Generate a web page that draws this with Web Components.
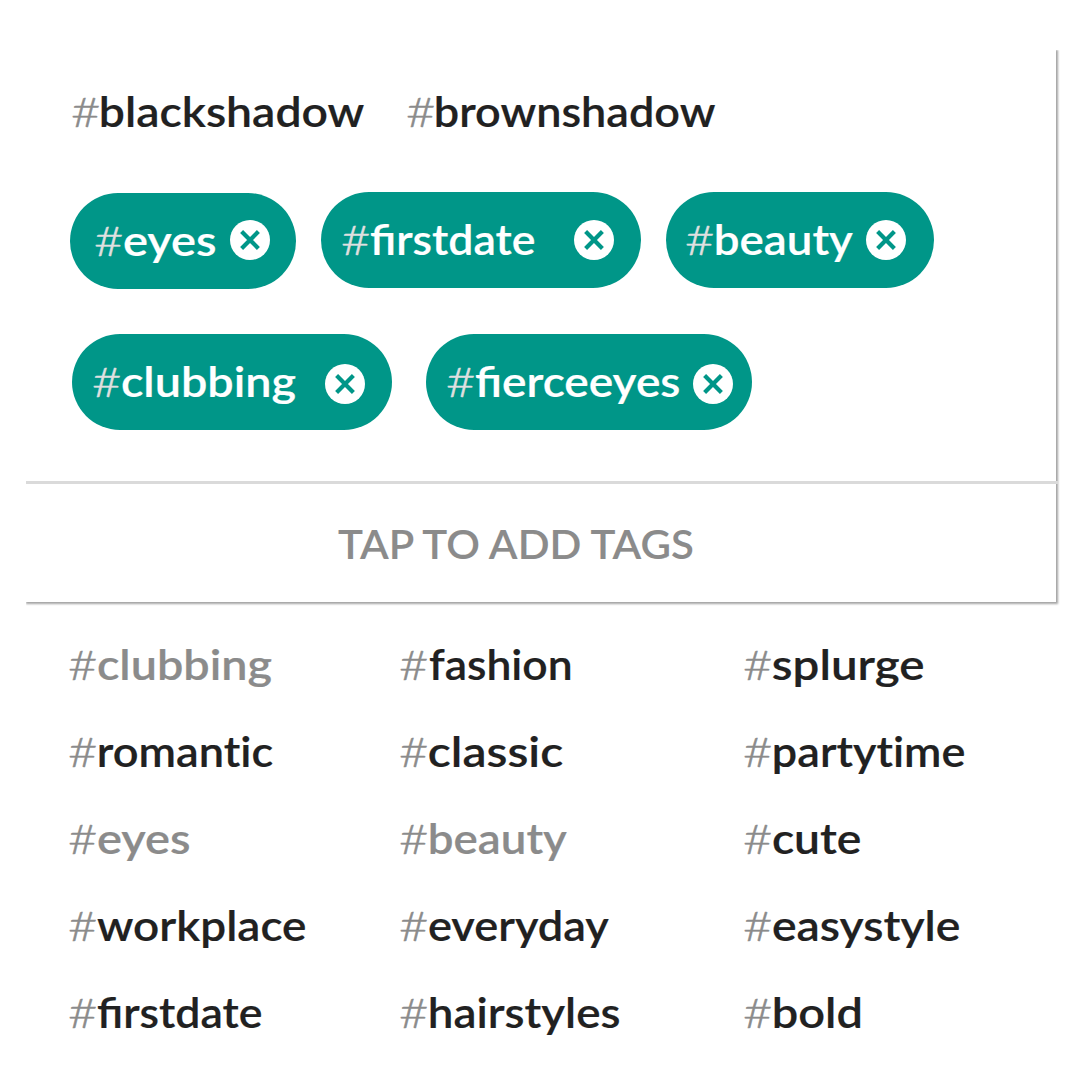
<!DOCTYPE html>
<html lang="en">
<head>
<meta charset="utf-8">
<title>Tags</title>
<style>
html,body{margin:0;background:#fff}
body{font-family:Lato,"Open Sans",sans-serif}
</style>
</head>
<body>
<tag-page></tag-page>
<script>
const FONT = 'Lato, "Open Sans", sans-serif';
const ctx = document.createElement('canvas').getContext('2d');

// Word whose visible ink fills the box given by its "width" attribute.
class FitText extends HTMLElement {
  connectedCallback() {
    const text = this.getAttribute('text');
    const width = +this.getAttribute('width');
    const weight = this.getAttribute('weight') || 600;
    const size = +this.getAttribute('size') || 42;
    // A tiny letter spacing turns ligatures off; only "fi" keeps its own.
    const spacing = text.includes('fi') ? '0px' : '0.01px';
    ctx.font = `${weight} ${size}px ${FONT}`;
    ctx.letterSpacing = spacing;
    const m = ctx.measureText(text);
    const left = -m.actualBoundingBoxLeft;
    const scale = width / (m.actualBoundingBoxRight - left);
    this.attachShadow({ mode: 'open' }).innerHTML = `
      <style>
        :host{display:block;flex:none;width:${width}px;height:50px}
        span{display:block;width:max-content;white-space:pre;font:${weight} ${size}px/50px ${FONT};
          letter-spacing:${spacing};-webkit-text-stroke:var(--stroke,.2px) currentColor;
          transform-origin:0 0;transform:scaleX(${scale}) translateX(${-left}px)}
      </style><span>${text}</span>`;
  }
}
customElements.define('fit-text', FitText);

class HashTag extends HTMLElement {
  connectedCallback() {
    const gap = +(this.getAttribute('gap') || 3);
    this.attachShadow({ mode: 'open' }).innerHTML = `
      <style>
        :host{display:flex;flex:none;gap:${gap - 0.5}px;margin-left:-.5px;height:50px;color:#212121}
        :host([muted]){color:#8b8b8b}
        :host([light]){color:#fff}
        .hash{color:#8b8b8b;--stroke:.4px}
        :host([light]) .hash{color:#e0e0e0}
      </style>
      <fit-text class="hash" text="#" width="27" weight="300"></fit-text>
      <fit-text text="${this.getAttribute('word')}" width="${this.getAttribute('width')}"></fit-text>`;
  }
}
customElements.define('hash-tag', HashTag);

class TagChip extends HTMLElement {
  connectedCallback() {
    const a = n => this.getAttribute(n);
    this.attachShadow({ mode: 'open' }).innerHTML = `
      <style>
        :host{display:flex;flex:none;box-sizing:border-box;width:${a('box')}px;height:96px;border-radius:48px;
          background:#009688;justify-content:space-between;padding:22px ${a('end')}px 0 ${a('start')}px}
        svg{display:block;width:40px;height:40px;flex:none;margin-top:${a('icon') || 6}px}
      </style>
      <hash-tag light word="${a('word')}" width="${a('width')}" gap="${a('gap') || 3}"></hash-tag>
      <svg viewBox="0 0 40 40"><circle cx="20" cy="20" r="20" fill="#fff"/>
        <path d="M11.6 11.6 28.4 28.4M28.4 11.6 11.6 28.4" stroke="#009688" stroke-width="4.2"/></svg>`;
  }
}
customElements.define('tag-chip', TagChip);

class TagCard extends HTMLElement {
  connectedCallback() {
    this.attachShadow({ mode: 'open' }).innerHTML = `
      <style>
        :host{display:flex;flex-direction:column;box-sizing:border-box;width:1030px;height:552px;background:#fff;
          box-shadow:1px 1px 2px 1px rgba(0,0,0,.36);clip-path:inset(0 -5px -5px 0)}
        .tags{height:431px;box-sizing:border-box;padding:36px 0 0 44px}
        .plain{display:flex;gap:43px;padding-left:2px}
        .row{display:flex;align-items:flex-start}
        .first{gap:25px;margin-top:56px}
        .second{gap:34px;margin-top:45px;padding-left:2px}
        .first tag-chip:first-child{margin-top:1px}
        .line{height:3px;width:1032px;background:#dadada}
        .add{display:flex;padding:35px 0 0 312px;color:#8b8b8b;--stroke:.1px}
      </style>
      <div class="tags">
        <div class="plain">
          <hash-tag word="blackshadow" width="263"></hash-tag>
          <hash-tag word="brownshadow" width="279"></hash-tag>
        </div>
        <div class="row first">
          <tag-chip word="eyes" width="91" box="226" start="25" end="26" icon="5" gap="3"></tag-chip>
          <tag-chip word="firstdate" width="164" box="320" start="21" end="27" gap="2"></tag-chip>
          <tag-chip word="beauty" width="137" box="268" start="20" end="28" gap="4"></tag-chip>
        </div>
        <div class="row second">
          <tag-chip word="clubbing" width="174" box="320" start="21" end="27" icon="8"></tag-chip>
          <tag-chip word="fierceeyes" width="204" box="326" start="21" end="19" icon="8" gap="2"></tag-chip>
        </div>
      </div>
      <div class="line"></div>
      <div class="add"><fit-text text="TAP TO ADD TAGS" width="360" size="40"></fit-text></div>`;
  }
}
customElements.define('tag-card', TagCard);

class TagList extends HTMLElement {
  connectedCallback() {
    const cols = [
      [331, [['clubbing',174,3,1],['romantic',174,4],['eyes',91,3,1],['workplace',208,2],['firstdate',164,2]]],
      [344, [['fashion',142,3],['classic',134,3],['beauty',137,4,1],['everyday',180,3],['hairstyles',189,4]]],
      [230, [['splurge',150,3],['partytime',190,4],['cute',87,3],['easystyle',186,3],['bold',86,4]]]
    ];
    this.attachShadow({ mode: 'open' }).innerHTML = `
      <style>
        :host{display:flex;padding-left:69px;margin-top:37px}
        div{display:flex;flex-direction:column;gap:37px}
      </style>` + cols.map(([w, tags]) => `<div style="width:${w}px">` + tags.map(([t, n, g, m]) =>
        `<hash-tag word="${t}" width="${n}" gap="${g}" ${m ? 'muted' : ''}></hash-tag>`).join('') + '</div>').join('');
  }
}
customElements.define('tag-list', TagList);

class TagPage extends HTMLElement {
  connectedCallback() {
    this.attachShadow({ mode: 'open' }).innerHTML = `
      <style>
        :host{display:block;box-sizing:border-box;width:1080px;height:1088px;padding-top:50px;overflow:hidden;background:#fff}
        tag-card{margin-left:26px}
      </style>
      <tag-card></tag-card><tag-list></tag-list>`;
  }
}
customElements.define('tag-page', TagPage);
</script>
</body>
</html>
